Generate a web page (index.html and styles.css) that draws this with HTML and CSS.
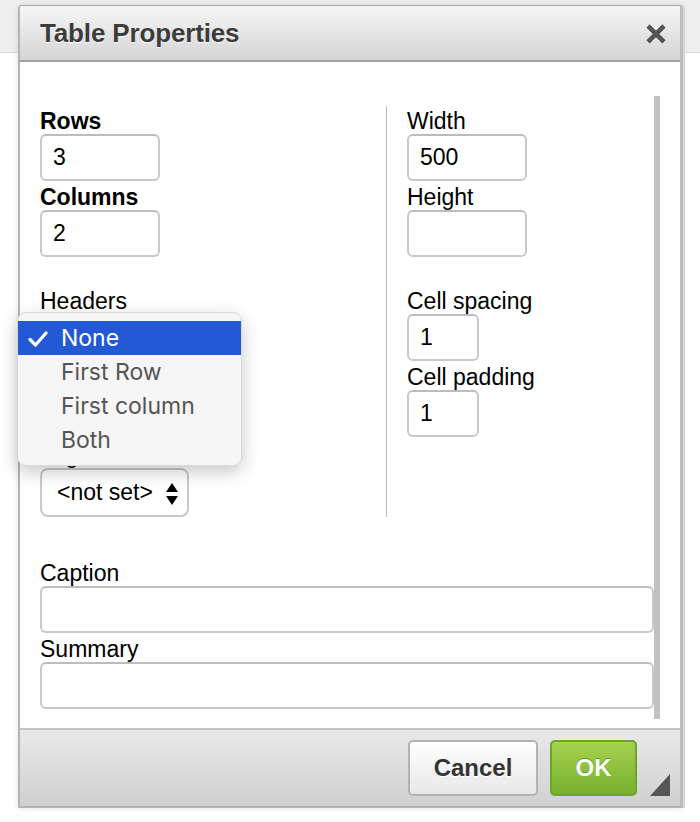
FILE: index.html
```html
<!DOCTYPE html>
<html>
<head>
<meta charset="utf-8">
<link rel="stylesheet" href="styles.css">
</head>
<body>
<div class="topbar"></div>
<div class="dialog">
  <div class="dlg-head">
    <span class="dlg-title">Table Properties</span>
    <svg class="close" width="22" height="20" viewBox="0 0 22 20"><path d="M3 2 L19 18 M19 2 L3 18" stroke="#fff" stroke-width="4.6" fill="none" transform="translate(0 1)"/><path d="M3 2 L19 18 M19 2 L3 18" stroke="#555" stroke-width="4.6" fill="none"/></svg>
  </div>
  <div class="dlg-body">
    <div class="main">
      <div class="cols">
        <div class="col col-left">
          <div class="field"><div class="lbl bold">Rows</div><div class="inp w120">3</div></div>
          <div class="field"><div class="lbl bold">Columns</div><div class="inp w120">2</div></div>
          <div class="spacer"></div>
          <div class="field"><div class="lbl">Headers</div><div class="sel sel-hdr"><span class="covered">None</span></div></div>
          <div class="field"><div class="lbl covered">Border</div><div class="inp w72"><span class="covered">1</span></div></div>
          <div class="field"><div class="lbl">Alignment</div><div class="sel sel-align"><span>&lt;not set&gt;</span><svg class="arrows" width="12" height="22" viewBox="0 0 12 22"><path d="M6 0 L12 9 L0 9 Z M0 13 L12 13 L6 22 Z" fill="#000"/></svg></div></div>
        </div>
        <div class="col col-right">
          <div class="field"><div class="lbl">Width</div><div class="inp w120">500</div></div>
          <div class="field"><div class="lbl">Height</div><div class="inp w120"></div></div>
          <div class="spacer"></div>
          <div class="field"><div class="lbl">Cell spacing</div><div class="inp w72">1</div></div>
          <div class="field"><div class="lbl">Cell padding</div><div class="inp w72">1</div></div>
        </div>
      </div>
      <div class="field caption"><div class="lbl">Caption</div><div class="inp wfull"></div></div>
      <div class="field"><div class="lbl">Summary</div><div class="inp wfull"></div></div>
    </div>
    <div class="vbar"></div>
  </div>
  <div class="dlg-foot">
    <button class="btn btn-cancel">Cancel</button>
    <button class="btn btn-ok">OK</button>
    <span class="resize"></span>
  </div>
</div>
<div class="popup">
  <div class="opt selected"><svg class="check" width="20" height="16" viewBox="0 0 20 16"><path d="M2 8.5 L7.5 14 L18 2" stroke="#fff" stroke-width="3.2" fill="none" stroke-linecap="round" stroke-linejoin="round"/></svg>None</div>
  <div class="opt">First Row</div>
  <div class="opt">First column</div>
  <div class="opt">Both</div>
</div>
</body>
</html>
```
FILE: styles.css
```css
html, body {
  margin: 0;
  padding: 0;
  background: #fff;
  width: 700px;
  height: 822px;
  overflow: hidden;
  font-family: "Liberation Sans", Arial, sans-serif;
}
.topbar {
  height: 52px;
  background: #efefef;
  border-bottom: 1px solid #dcdcdc;
}
.dialog {
  position: absolute;
  left: 18px;
  top: 5px;
  width: 660px;
  border: 2px solid #b4b4b4;
  border-top: 1px solid #a9a9a9;
  border-right: 3px solid #bdbdbd;
  border-radius: 4px 4px 0 0;
  background: #fff;
  box-shadow: 2px 0 0 #d6d6d6, 0 0 6px rgba(0,0,0,0.12);
}
.dlg-head {
  height: 54px;
  border-bottom: 2px solid #a3a3a3;
  background: linear-gradient(#f6f6f6, #d5d5d5);
  display: flex;
  align-items: center;
  justify-content: space-between;
  padding: 0 13px 0 20px;
  border-radius: 3px 3px 0 0;
}
.dlg-title {
  font-size: 26px;
  font-weight: bold;
  letter-spacing: -0.15px;
  line-height: 30px;
  color: #3c3c3c;
  text-shadow: 0 1px 0 #fff;
}
.close { display: block; margin-top: 1px; }
.dlg-body {
  display: flex;
  padding: 44px 20px 19px 20px;
}
.main { flex: 1; min-width: 0; }
.vbar {
  width: 6px;
  margin-top: -10px;
  margin-bottom: -10px;
  background: #c2c2be;
}
.cols { display: flex; }
.col { padding-top: 2px; }
.col-left { width: 346px; }
.col-right {
  flex: 1;
  border-left: 1.5px solid #bdbdbd;
  padding-left: 20px;
}
.field { margin-bottom: 3px; }
.field:last-child { margin-bottom: 0; }
.spacer { height: 28px; }
.lbl {
  font-size: 23px;
  line-height: 26px;
  color: #000;
  white-space: nowrap;
}
.lbl.bold { font-weight: bold; }
.covered { visibility: hidden; }
.inp {
  box-sizing: border-box;
  height: 47px;
  border: 2px solid #c9c9c9;
  border-top-color: #bcbcbc;
  border-radius: 6px;
  padding-left: 11px;
  font-size: 23px;
  line-height: 43px;
  color: #000;
  background: #fff;
}
.w120 { width: 120px; }
.w72 { width: 72px; }
.wfull { width: 100%; }
.caption { margin-top: 43px; }
.sel {
  box-sizing: border-box;
  height: 49px;
  border: 2px solid #c9c9c9;
  border-radius: 8px;
  padding-left: 15px;
  font-size: 23px;
  line-height: 45px;
  display: flex;
  align-items: center;
  background: #fff;
}
.sel-hdr { width: 190px; }
.sel-align { width: 149px; justify-content: space-between; padding-right: 9px; }
.sel-align span { line-height: 45px; }
.arrows { display: block; margin-top: 2px; }
.dlg-foot {
  position: relative;
  height: 76px;
  border-top: 2px solid #c4c4c4;
  background: linear-gradient(#e9e9e9, #d0d0d0);
  display: flex;
  justify-content: flex-end;
  align-items: center;
  gap: 12px;
  padding-right: 43px;
}
.btn {
  box-sizing: border-box;
  height: 56px;
  border-radius: 5px;
  font-family: "Liberation Sans", Arial, sans-serif;
  font-size: 24px;
  font-weight: bold;
  padding: 0;
  margin: 0;
}
.btn-cancel {
  width: 130px;
  border: 2px solid #b3b3b3;
  background: linear-gradient(#ffffff, #e7e7e7);
  color: #333;
  text-shadow: 0 1px 0 #fff;
}
.btn-ok {
  width: 87px;
  border: 2px solid #6da42b;
  background: linear-gradient(#a5d24f, #78b02e);
  color: #fff;
  text-shadow: 0 -1px 0 #5d8f24;
}
.resize {
  position: absolute;
  right: 10px;
  bottom: 10px;
  width: 0;
  height: 0;
  border-left: 20px solid transparent;
  border-bottom: 22px solid #565656;
}
.popup {
  position: absolute;
  left: 17px;
  top: 312px;
  width: 225px;
  box-sizing: border-box;
  padding: 8px 0;
  background: #f6f6f6;
  border: 1px solid #dadada;
  border-radius: 9px;
  box-shadow: 0 6px 18px rgba(0,0,0,0.22);
  font-family: Inter, "Noto Sans", sans-serif;
}
.opt {
  height: 34px;
  line-height: 34px;
  padding-left: 43px;
  font-size: 23px;
  color: #555;
  position: relative;
}
.opt.selected {
  background: #2459d6;
  color: #fff;
}
.check {
  position: absolute;
  left: 10px;
  top: 10px;
}
```
